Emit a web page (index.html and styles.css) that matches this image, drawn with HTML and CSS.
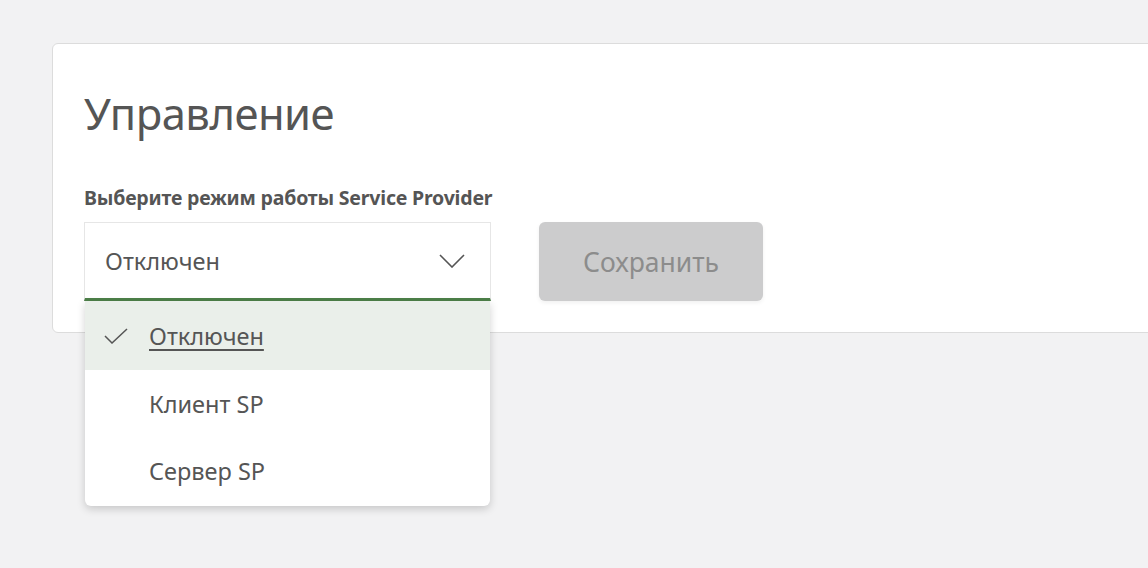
FILE: index.html
```html
<!DOCTYPE html>
<html lang="ru">

<head>
  <meta charset="UTF-8" />
  <meta name="viewport" content="width=device-width, initial-scale=1" />
  <title>Управление</title>
  <link rel="stylesheet" href="styles.css">
</head>

<body>

  <section class="panel">
    <h1 class="panel-title">Управление</h1>

    <div class="field-label">Выберите режим работы Service Provider</div>

    <div class="form-row">
      <div class="select">
        <div class="select-box">
          <span class="select-value">Отключен</span>
          <svg class="chevron" width="26" height="14" viewBox="0 0 26 14">
            <path d="M1 1 L13 13 L25 1" fill="none" stroke="#555" stroke-width="1.6" />
          </svg>
        </div>

        <ul class="select-menu">
          <li class="menu-item selected">
            <svg class="check" width="24" height="16" viewBox="0 0 24 16">
              <path d="M1 8 L8 15 L23 1" fill="none" stroke="#555" stroke-width="1.5" />
            </svg>
            <span>Отключен</span>
          </li>
          <li class="menu-item"><span>Клиент SP</span></li>
          <li class="menu-item"><span>Сервер SP</span></li>
        </ul>
      </div>

      <button class="save-btn" disabled>Сохранить</button>
    </div>
  </section>

</body>

</html>
```

FILE: styles.css
```css
html {
  overflow: hidden;
}

body {
  font-family: 'Noto Sans', 'Open Sans', sans-serif;
  background: #f2f2f3;
  margin: 0;
  padding: 43px 0 0 52px;
  min-height: 100vh;
  box-sizing: border-box;
  color: #555;
}

.panel {
  background: #fff;
  border: 1px solid #dcdcdc;
  border-radius: 6px;
  width: 1150px;
  height: 290px;
  padding: 0 31px;
  box-sizing: border-box;
}

.panel-title {
  font-size: 43.5px;
  font-weight: 400;
  margin: 39px 0 0;
  line-height: 60px;
  letter-spacing: -0.5px;
}

.field-label {
  font-size: 19.5px;
  font-weight: 700;
  margin-top: 43px;
  line-height: 24px;
  letter-spacing: -0.2px;
}

.form-row {
  display: flex;
  gap: 48px;
  margin-top: 12px;
  align-items: flex-start;
}

.select {
  position: relative;
  width: 407px;
}

.select-box {
  height: 75px;
  border: 1px solid #e6e6e6;
  border-bottom: 3px solid #4d8049;
  box-sizing: content-box;
  display: flex;
  align-items: center;
  justify-content: space-between;
  padding: 0 25px 0 20px;
  background: #fff;
}

.select-value {
  font-size: 23.5px;
}

.select-menu {
  position: absolute;
  top: 79px;
  left: 1px;
  right: 1px;
  list-style: none;
  margin: 0;
  padding: 0 0 2px;
  background: #fff;
  border-radius: 0 0 6px 6px;
  box-shadow: 0 3px 8px rgba(0, 0, 0, 0.18);
}

.menu-item {
  height: 67px;
  display: flex;
  align-items: center;
  padding-left: 64px;
  font-size: 23.5px;
  position: relative;
}

.menu-item.selected {
  background: #eaefea;
  height: 69px;
}

.menu-item.selected span {
  text-decoration: underline;
  text-underline-offset: 4px;
}

.check {
  position: absolute;
  left: 19px;
  top: 27px;
}

.save-btn {
  width: 224px;
  height: 79px;
  border: none;
  border-radius: 6px;
  background: #cccccd;
  color: #8c8c8c;
  font-family: inherit;
  font-size: 26.5px;
  box-shadow: 0 2px 4px rgba(0, 0, 0, 0.06);
}
```
